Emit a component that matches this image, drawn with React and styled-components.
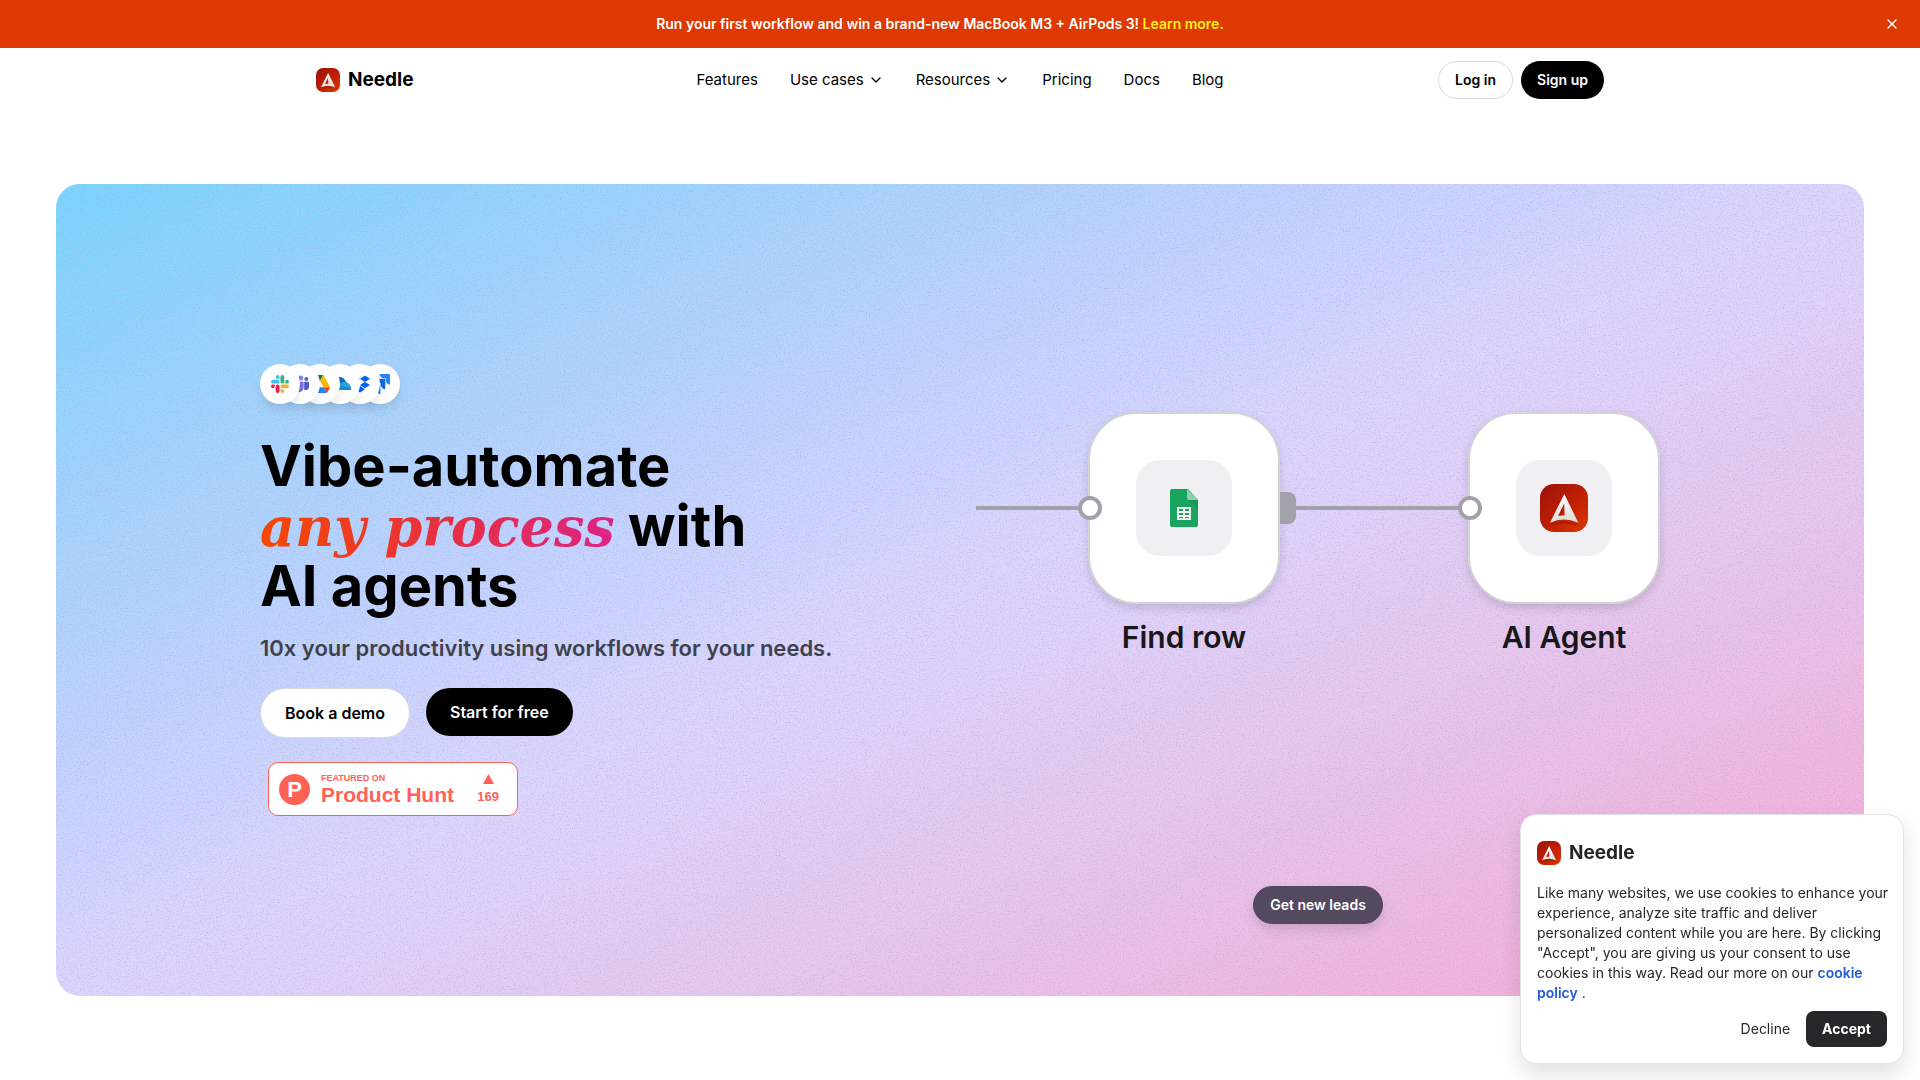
import React from 'react';
import styled, { createGlobalStyle } from 'styled-components';
import { ChevronDown, X } from 'lucide-react';

const GlobalStyle = createGlobalStyle`
    *, *::before, *::after {
        box-sizing: border-box;
    }
    body {
        margin: 0;
        background-color: #ffffff;
        color: #000000;
        font-family: Inter, "Liberation Sans", sans-serif;
        font-size: 15px;
        line-height: 24px;
    }
    h1, p {
        margin: 0;
    }
    a {
        color: inherit;
        text-decoration: none;
    }
    button {
        font-family: inherit;
        cursor: pointer;
    }
`

//Banner
const Banner = styled.div`
    display: flex;
    align-items: center;
    height: 48px;
    padding-right: 16px;
    background-color: #dd3900;
    color: white;
`
const BannerText = styled.p`
    flex: 1;
    text-align: center;
    font-size: 14px;
    line-height: 20px;
    font-weight: 600;
`
const BannerLink = styled.a`
    color: #ffee1f;
`
const CloseButton = styled.button`
    display: flex;
    align-items: center;
    justify-content: center;
    width: 24px;
    height: 24px;
    padding: 0;
    border: 0;
    background: none;
    color: white;
`

//Header
const Header = styled.header`
    display: grid;
    grid-template-columns: 1fr auto 1fr;
    align-items: center;
    max-width: 1320px;
    height: 64px;
    margin: 0 auto;
    padding: 0 16px;
`
const Brand = styled.a`
    display: flex;
    align-items: center;
    gap: 8px;
    font-size: 19px;
    font-weight: 700;
    color: ${props => props.$color || '#000000'};
`
const Nav = styled.nav`
    display: flex;
    gap: 32px;
`
const NavLink = styled.a`
    display: flex;
    align-items: center;
    gap: 4px;
`
const HeaderActions = styled.div`
    display: flex;
    justify-content: flex-end;
    gap: 8px;
`
const Button = styled.button`
    padding: ${props => props.$large ? '12px 24px' : '8px 16px'};
    font-size: ${props => props.$large ? '16px' : '14px'};
    line-height: ${props => props.$large ? '24px' : '20px'};
    font-weight: 600;
    border-radius: 25px;
    border: ${props => props.$outline ? '1px solid #dadada' : '0'};
    background-color: ${props => props.$outline ? '#ffffff' : '#000000'};
    color: ${props => props.$outline ? '#000000' : '#ffffff'};
`

//Hero
const Hero = styled.section`
    position: relative;
    margin: 72px 56px 0;
    padding: 56px 24px;
    border-radius: 24px;
    overflow: hidden;
    background: linear-gradient(to bottom right, #7ad5fd, #bbd3fe 32%, #ddd6fe 50%, #e6c8ef 68%, #f9a8d4);
`
const Grain = styled.svg`
    position: absolute;
    inset: 0;
    width: 100%;
    height: 100%;
    opacity: 0.4;
`
const HeroGrid = styled.div`
    position: relative;
    display: grid;
    grid-template-columns: 1fr 1fr;
    gap: 32px;
    align-items: center;
    max-width: 1400px;
    margin: 0 auto;
`
const Pitch = styled.div`
    display: flex;
    flex-direction: column;
    align-items: flex-start;
`
const IconStack = styled.div`
    display: flex;
    isolation: isolate;
`
const IconCircle = styled.span`
    position: relative;
    z-index: ${props => props.$level};
    display: flex;
    align-items: center;
    justify-content: center;
    width: 40px;
    height: 40px;
    border-radius: 50%;
    background-color: white;
    box-shadow: 0 6px 10px rgb(0 0 0 / 9%);

    & + & {
        margin-left: -20px;
    }
`
const Title = styled.h1`
    margin-top: 32px;
    font-size: 56px;
    line-height: 60px;
    font-weight: 700;
`
const Accent = styled.em`
    font-family: "DejaVu Serif", serif;
    font-size: 54px;
    line-height: 0;
    font-weight: 700;
    font-style: italic;
    background: linear-gradient(to right, #f54900, #e7303f 50%, #db2585);
    background-clip: text;
    color: transparent;
`
const Subtitle = styled.p`
    margin-top: 16px;
    font-size: 22px;
    line-height: 32px;
    font-weight: 600;
    color: #3f424d;
`
const HeroActions = styled.div`
    display: flex;
    align-items: flex-start;
    gap: 16px;
    margin-top: 24px;
`
const Badge = styled.a`
    display: flex;
    align-items: center;
    gap: 11px;
    width: 250px;
    height: 54px;
    margin: 24px 0 0 8px;
    padding: 0 18px 0 10px;
    border: 1px solid #ff6154;
    border-radius: 10px;
    background-color: white;
    color: #ff6154;
    font-family: "Liberation Sans", Arial, sans-serif;
    font-weight: 700;
`
const BadgeLogo = styled.span`
    display: flex;
    align-items: center;
    justify-content: center;
    width: 31px;
    height: 31px;
    border-radius: 50%;
    background-color: #ff6154;
    color: white;
    font-size: 22px;
    line-height: 31px;
`
const BadgeText = styled.span`
    flex: 1;
    display: flex;
    flex-direction: column;
    white-space: nowrap;
`
const BadgeSmall = styled.span`
    font-size: 9px;
    line-height: 12px;
`
const BadgeName = styled.span`
    font-size: 21px;
    line-height: 22px;
`
const Votes = styled.span`
    display: flex;
    flex-direction: column;
    align-items: center;
    gap: 6px;
    font-size: 13px;
    line-height: 14px;
`

//Workflow canvas
const Canvas = styled.div`
    display: flex;
    flex-direction: column;
    align-items: center;
    justify-content: space-between;
    height: 700px;
    padding: 172px 0 16px;
`
const Flow = styled.div`
    display: flex;
    align-items: flex-start;
    width: 100%;
`
const Edge = styled.div`
    flex: ${props => props.$grow} 1 0;
    height: 4px;
    margin-top: 94px;
    background-color: #a1a1aa;
`
const Node = styled.div`
    display: flex;
    flex-direction: column;
    align-items: center;
    gap: 12px;
    width: 192px;
    font-size: 30px;
    line-height: 42px;
    font-weight: 600;
    color: #18181b;
    white-space: nowrap;
`
const NodeCard = styled.div`
    position: relative;
    display: flex;
    align-items: center;
    justify-content: center;
    width: 192px;
    height: 192px;
    border: 2px solid #d4d4d8;
    border-radius: 48px;
    background-color: white;
    box-shadow: 0 4px 10px rgb(0 0 0 / 14%);
`
const NodeIcon = styled.div`
    display: flex;
    align-items: center;
    justify-content: center;
    width: 96px;
    height: 96px;
    border-radius: 24px;
    background-color: #f0f0f2;
`
const InputHandle = styled.span`
    position: absolute;
    left: -12px;
    top: 82px;
    width: 24px;
    height: 24px;
    border: 4px solid #a1a1aa;
    border-radius: 50%;
    background-color: white;
`
const OutputHandle = styled.span`
    position: absolute;
    right: -18px;
    top: 78px;
    width: 16px;
    height: 32px;
    border-radius: 0 8px 8px 0;
    background-color: #a1a1aa;
`
const PromptButton = styled.button`
    padding: 8px 16px;
    border: 1px solid #54475f;
    border-radius: 19px;
    background-color: #54495f;
    color: white;
    font-size: 14px;
    line-height: 20px;
    font-weight: 600;
    box-shadow: 0 6px 12px rgb(0 0 0 / 12%);
`

//Cookie notice
const CookieCard = styled.aside`
    position: fixed;
    right: 16px;
    bottom: 16px;
    display: flex;
    flex-direction: column;
    gap: 8px;
    width: 384px;
    padding: 16px 0;
    border: 1px solid #e4e4e7;
    border-radius: 16px;
    background-color: white;
    color: #27272a;
    box-shadow: 0 10px 20px rgb(0 0 0 / 12%);
    font-size: 14px;
    line-height: 20px;
`
const CookieHead = styled.div`
    display: flex;
    align-items: center;
    height: 44px;
    padding: 0 16px;
`
const CookieText = styled.p`
    padding: 0 8px 0 16px;
`
const CookieLink = styled.a`
    color: #2159d6;
    font-weight: 600;
`
const CookieActions = styled.div`
    display: flex;
    justify-content: flex-end;
    padding: 0 16px;
`
const CookieButton = styled.button`
    padding: 8px 16px;
    border: 0;
    border-radius: 8px;
    font-size: 14px;
    line-height: 20px;
    font-weight: ${props => props.$primary ? 700 : 400};
    background-color: ${props => props.$primary ? '#27272a' : 'transparent'};
    color: ${props => props.$primary ? '#ffffff' : '#27272a'};
`

const NeedleLogo = ({ size = 24, id }) => (
    <svg width={size} height={size} viewBox="0 0 48 48" aria-hidden="true">
        <defs>
            <linearGradient id={`${id}-bg`} x1="0" y1="0" x2="1" y2="1">
                <stop offset="0" stopColor="#9c1208" />
                <stop offset="0.5" stopColor="#bd1d05" />
                <stop offset="1" stopColor="#dd3900" />
            </linearGradient>
            <linearGradient id={`${id}-fg`} x1="0" y1="0" x2="0" y2="1">
                <stop offset="0" stopColor="#ffffff" />
                <stop offset="1" stopColor="#dcdcdc" />
            </linearGradient>
        </defs>
        <rect width="48" height="48" rx="14" fill={`url(#${id}-bg)`} />
        <path d="M10 40 24 37 38 40 36 41 24 39 12 41Z" fill="#7a1404" opacity="0.5" />
        <path
            d="M24.3 10 38.3 38.7Q24 32.5 10 38.7ZM24.2 19.5 18 32Q21 31 24.6 31.6Z"
            fill={`url(#${id}-fg)`}
            fillRule="evenodd"
        />
    </svg>
)

const SheetsIcon = () => (
    <svg width="28" height="38" viewBox="0 0 28 38" aria-hidden="true">
        <path d="M2 0H18L28 11V36a2 2 0 0 1-2 2H2a2 2 0 0 1-2-2V2a2 2 0 0 1 2-2Z" fill="#18a45f" />
        <path d="M18 11H28V21Z" fill="#0f8f4f" opacity="0.5" />
        <path d="M17 0 28 11H19a2 2 0 0 1-2-2Z" fill="#8ed1b1" />
        <path d="M7 18H21V31H7ZM9 20V22H13V20ZM15 20V22H19V20ZM9 24V26H13V24ZM15 24V26H19V24ZM9 28V29H13V28ZM15 28V29H19V28Z" fill="#f1f1f1" fillRule="evenodd" />
    </svg>
)

const SlackIcon = () => (
    <svg width="18" height="18" viewBox="0 0 24 24" aria-hidden="true">
        <path fill="#e01e5a" d="M5.042 15.165a2.528 2.528 0 0 1-2.52 2.523A2.528 2.528 0 0 1 0 15.165a2.527 2.527 0 0 1 2.522-2.52h2.52v2.52zM6.313 15.165a2.527 2.527 0 0 1 2.521-2.52 2.527 2.527 0 0 1 2.521 2.52v6.313A2.528 2.528 0 0 1 8.834 24a2.528 2.528 0 0 1-2.521-2.522v-6.313z" />
        <path fill="#36c5f0" d="M8.834 5.042a2.528 2.528 0 0 1-2.521-2.52A2.528 2.528 0 0 1 8.834 0a2.528 2.528 0 0 1 2.521 2.522v2.52H8.834zM8.834 6.313a2.528 2.528 0 0 1 2.521 2.521 2.528 2.528 0 0 1-2.521 2.521H2.522A2.528 2.528 0 0 1 0 8.834a2.528 2.528 0 0 1 2.522-2.521h6.312z" />
        <path fill="#2eb67d" d="M18.956 8.834a2.528 2.528 0 0 1 2.522-2.521A2.528 2.528 0 0 1 24 8.834a2.528 2.528 0 0 1-2.522 2.521h-2.522V8.834zM17.688 8.834a2.528 2.528 0 0 1-2.523 2.521 2.527 2.527 0 0 1-2.52-2.521V2.522A2.527 2.527 0 0 1 15.165 0a2.528 2.528 0 0 1 2.523 2.522v6.312z" />
        <path fill="#ecb22e" d="M15.165 18.956a2.528 2.528 0 0 1 2.523 2.522A2.528 2.528 0 0 1 15.165 24a2.527 2.527 0 0 1-2.52-2.522v-2.522h2.52zM15.165 17.688a2.527 2.527 0 0 1-2.52-2.523 2.526 2.526 0 0 1 2.52-2.52h6.313A2.527 2.527 0 0 1 24 15.165a2.528 2.528 0 0 1-2.522 2.523h-6.313z" />
    </svg>
)

const TeamsIcon = () => (
    <svg width="18" height="18" viewBox="0 0 18 18" aria-hidden="true">
        <circle cx="9.6" cy="3" r="2.6" fill="#7b83eb" />
        <circle cx="15.3" cy="4" r="1.9" fill="#5059c9" />
        <path d="M13.2 6.7H17a1 1 0 0 1 1 1V12a3.4 3.4 0 0 1-4.8 2.8Z" fill="#5059c9" />
        <path d="M4 6.7H12.6V12a5 5 0 0 1-8.6 3.6Z" fill="#7b6fe0" />
        <rect y="4.8" width="8.6" height="8.6" rx="1" fill="#4b53bc" />
    </svg>
)

const DriveIcon = () => (
    <svg width="20" height="18" viewBox="0 0 87.3 78" aria-hidden="true">
        <path d="m6.6 66.85 3.85 6.65c.8 1.4 1.95 2.5 3.3 3.3l13.75-23.8h-27.5c0 1.55.4 3.1 1.2 4.5z" fill="#0066da" />
        <path d="m43.65 25-13.75-23.8c-1.35.8-2.5 1.9-3.3 3.3l-25.4 44a9.06 9.06 0 0 0-1.2 4.5h27.5z" fill="#00ac47" />
        <path d="m73.55 76.8c1.35-.8 2.5-1.9 3.3-3.3l1.6-2.75 7.65-13.25c.8-1.4 1.2-2.95 1.2-4.5h-27.5l5.85 11.5z" fill="#ea4335" />
        <path d="m43.65 25 13.75-23.8c-1.35-.8-2.9-1.2-4.5-1.2h-18.5c-1.6 0-3.15.45-4.5 1.2z" fill="#00832d" />
        <path d="m59.8 53h-32.3l-13.75 23.8c1.35.8 2.9 1.2 4.5 1.2h50.8c1.6 0 3.15-.45 4.5-1.2z" fill="#2684fc" />
        <path d="m73.4 26.5-12.7-22c-.8-1.4-1.95-2.5-3.3-3.3l-13.75 23.8 16.15 28h27.45c0-1.55-.4-3.1-1.2-4.5z" fill="#ffba00" />
    </svg>
)

const SailIcon = () => (
    <svg width="22" height="16" viewBox="0 0 22 16" aria-hidden="true">
        <path d="M2 14V1H10Q15 1 17 6Q22 8 22 14Z" fill="#0f6cbd" />
        <path d="M5 14Q12 4 17 6Q22 8 22 14Z" fill="#28a3dc" />
        <path d="M5 14Q13 7 22 13V14Z" fill="#1c8ac6" />
    </svg>
)

const DropboxIcon = () => (
    <svg width="20" height="20" viewBox="0 0 24 24" fill="#0061fe" aria-hidden="true">
        <path d="M6 1.807L0 5.629l6 3.822 6.001-3.822L6 1.807zM18 1.807l-6 3.822 6 3.822 6-3.822-6-3.822zM0 13.274l6 3.822 6.001-3.822L6 9.452l-6 3.822zM18 9.452l-6 3.822 6 3.822 6-3.822-6-3.822zM6 18.371l6.001 3.822 6-3.822-6-3.822L6 18.371z" />
    </svg>
)

const JiraIcon = () => (
    <svg width="20" height="20" viewBox="0 0 24 24" aria-hidden="true">
        <path fill="#2684ff" d="M23.013 0H11.455a5.215 5.215 0 0 0 5.215 5.215h2.129v2.057A5.215 5.215 0 0 0 24 12.483V1.005A1.001 1.001 0 0 0 23.013 0Z" />
        <path fill="#1267e0" d="M17.294 5.757H5.736a5.215 5.215 0 0 0 5.215 5.214h2.129v2.058a5.218 5.218 0 0 0 5.215 5.214V6.758a1.001 1.001 0 0 0-1.001-1.001z" />
        <path fill="#2684ff" d="M11.571 11.513H0a5.218 5.218 0 0 0 5.232 5.215h2.13v2.057A5.215 5.215 0 0 0 12.575 24V12.518a1.005 1.005 0 0 0-1.005-1.005z" />
    </svg>
)

const navItems = [
    { label: 'Features' },
    { label: 'Use cases', menu: true },
    { label: 'Resources', menu: true },
    { label: 'Pricing' },
    { label: 'Docs' },
    { label: 'Blog' },
]

const integrations = [SlackIcon, TeamsIcon, DriveIcon, SailIcon, DropboxIcon, JiraIcon]

export default function App() {
  return (
    <>
        <GlobalStyle />
        <Banner>
            <BannerText>
                Run your first workflow and win a brand-new MacBook M3 + AirPods 3!{' '}
                <BannerLink href="#">Learn more.</BannerLink>
            </BannerText>
            <CloseButton type="button" aria-label="Close banner">
                <X size={16} />
            </CloseButton>
        </Banner>
        <Header>
            <Brand href="#">
                <NeedleLogo id="header" />
                Needle
            </Brand>
            <Nav>
                {navItems.map(item => (
                    <NavLink href="#" key={item.label}>
                        {item.label}
                        {item.menu && <ChevronDown size={16} />}
                    </NavLink>
                ))}
            </Nav>
            <HeaderActions>
                <Button type="button" $outline>Log in</Button>
                <Button type="button">Sign up</Button>
            </HeaderActions>
        </Header>
        <Hero>
            <Grain aria-hidden="true">
                <filter id="grain">
                    <feTurbulence type="fractalNoise" baseFrequency="0.7" numOctaves="3" stitchTiles="stitch" />
                    <feColorMatrix values="0 0 0 0 0.35  0 0 0 0 0.35  0 0 0 0 0.6  3 0 0 0 -1.5" />
                </filter>
                <rect width="100%" height="100%" filter="url(#grain)" />
            </Grain>
            <HeroGrid>
                <Pitch>
                    <IconStack>
                        {integrations.map((Icon, i) => (
                            <IconCircle key={i} $level={integrations.length - i}>
                                <Icon />
                            </IconCircle>
                        ))}
                    </IconStack>
                    <Title>
                        Vibe-automate<br />
                        <Accent>any process</Accent> with<br />
                        AI agents
                    </Title>
                    <Subtitle>10x your productivity using workflows for your needs.</Subtitle>
                    <HeroActions>
                        <Button type="button" $large $outline>Book a demo</Button>
                        <Button type="button" $large>Start for free</Button>
                    </HeroActions>
                    <Badge href="#">
                        <BadgeLogo>P</BadgeLogo>
                        <BadgeText>
                            <BadgeSmall>FEATURED ON</BadgeSmall>
                            <BadgeName>Product Hunt</BadgeName>
                        </BadgeText>
                        <Votes>
                            <svg width="11" height="10" viewBox="0 0 11 10" aria-hidden="true">
                                <path d="M5.500 0 11 10H0Z" fill="#ff6154" />
                            </svg>
                            169
                        </Votes>
                    </Badge>
                </Pitch>
                <Canvas>
                    <Flow>
                        <Edge $grow={112} />
                        <Node>
                            <NodeCard>
                                <InputHandle />
                                <NodeIcon><SheetsIcon /></NodeIcon>
                                <OutputHandle />
                            </NodeCard>
                            Find row
                        </Node>
                        <Edge $grow={188} />
                        <Node>
                            <NodeCard>
                                <InputHandle />
                                <NodeIcon><NeedleLogo size={48} id="agent" /></NodeIcon>
                            </NodeCard>
                            AI Agent
                        </Node>
                    </Flow>
                    <PromptButton type="button">Get new leads</PromptButton>
                </Canvas>
            </HeroGrid>
        </Hero>
        <CookieCard>
            <CookieHead>
                <Brand href="#" $color="#27272a">
                    <NeedleLogo id="cookie" />
                    Needle
                </Brand>
            </CookieHead>
            <CookieText>
                Like many websites, we use cookies to enhance your experience, analyze site
                traffic and deliver personalized content while you are here. By clicking
                "Accept", you are giving us your consent to use cookies in this way. Read our
                more on our <CookieLink href="#">cookie policy</CookieLink> .
            </CookieText>
            <CookieActions>
                <CookieButton type="button">Decline</CookieButton>
                <CookieButton type="button" $primary>Accept</CookieButton>
            </CookieActions>
        </CookieCard>
    </>
  );
}
